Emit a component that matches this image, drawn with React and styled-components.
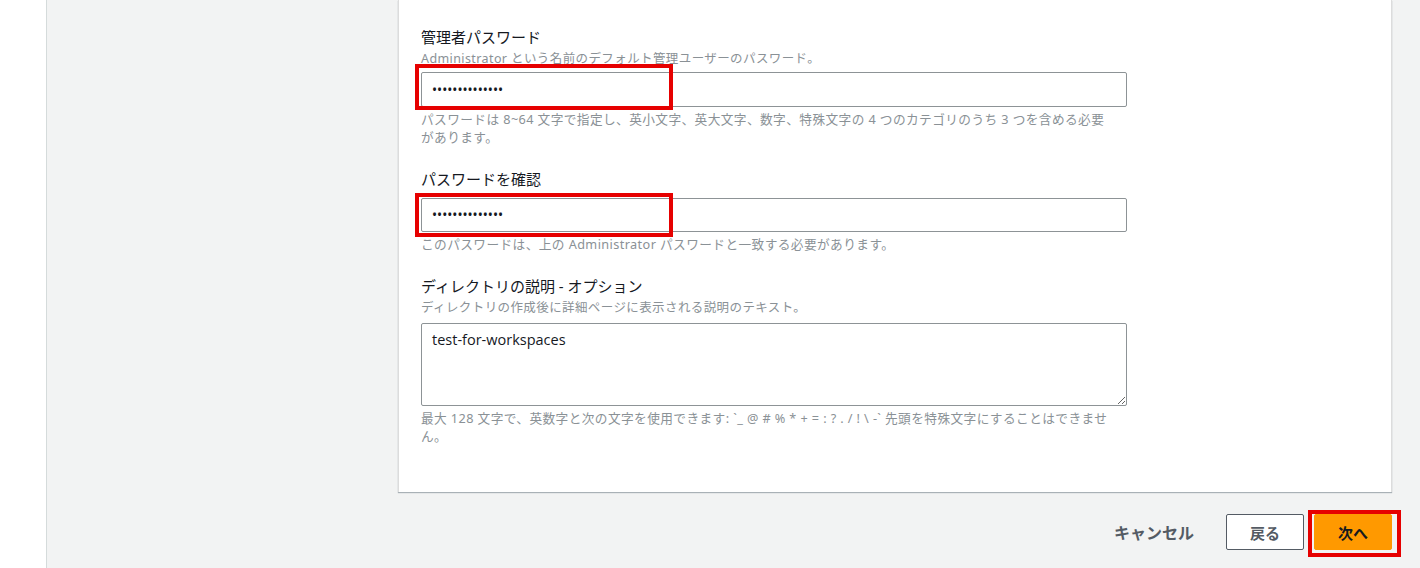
import styled, { createGlobalStyle } from 'styled-components'

const GlobalStyle = createGlobalStyle`
  html, body {
    margin: 0;
    padding: 0;
    background: #ffffff;
    font-family: "Noto Sans", "Noto Sans CJK JP", sans-serif;
  }
`

const Page = styled.div`
  display: flex;
  min-height: 568px;
  overflow: hidden;
`

const SideStrip = styled.div`
  width: 46px;
  flex-shrink: 0;
  background: #ffffff;
`

const Main = styled.main`
  flex: 1;
  background: #f2f3f3;
  border-left: 1px solid #d5dbdb;
  padding: 0 28px 0 351px;
  display: flex;
  flex-direction: column;
`

const Card = styled.section`
  background: #ffffff;
  border-left: 1px solid #dcdcdc;
  border-right: 1px solid #dcdcdc;
  box-shadow: 0 1px 1px 0 rgba(0, 27, 43, 0.3);
  padding: 27px 22px 47px 22px;
`

const Form = styled.div`
  width: 706px;
  display: flex;
  flex-direction: column;
`

const Field = styled.div`
  display: flex;
  flex-direction: column;
  margin-top: ${p => (p.$first ? 0 : 23)}px;
`

const Label = styled.label`
  font-size: 15px;
  line-height: 20px;
  color: #16191f;
`

const Description = styled.div`
  font-size: 12.5px;
  line-height: 16px;
  letter-spacing: 0.4px;
  color: #8a9196;
  margin-top: 4px;
`

const InputWrap = styled.div`
  position: relative;
  margin-top: ${p => p.$gap}px;
`

const TextInput = styled.input`
  box-sizing: border-box;
  width: 100%;
  height: ${p => p.$h}px;
  border: 1px solid #8d9396;
  border-radius: 2px;
  padding: 0 10px;
  font-family: "Noto Sans", "Noto Sans CJK JP", sans-serif;
  font-size: 13.5px;
  color: #16191f;
  background: #ffffff;
  outline: none;
`

const TextArea = styled.textarea`
  box-sizing: border-box;
  display: block;
  width: 100%;
  height: 83px;
  border: 1px solid #8d9396;
  border-radius: 2px;
  padding: 6px 10px;
  font-family: "Open Sans", "Noto Sans CJK JP", sans-serif;
  font-size: 14.5px;
  line-height: 20px;
  color: #16191f;
  background: #ffffff;
  outline: none;
`

const Highlight = styled.div`
  position: absolute;
  left: -6px;
  top: ${p => p.$top}px;
  width: 258px;
  height: ${p => p.$h}px;
  box-sizing: border-box;
  border: 4px solid #e60000;
  pointer-events: none;
`

const Hint = styled.div`
  font-size: 12.7px;
  line-height: 18px;
  letter-spacing: 0.4px;
  color: #8a9196;
  margin-top: 3px;
`

const Footer = styled.div`
  display: flex;
  justify-content: flex-end;
  align-items: center;
  margin-top: 22px;
  gap: 10px;
`

const LinkButton = styled.button`
  background: none;
  border: none;
  font-family: "Noto Sans", "Noto Sans CJK JP", sans-serif;
  font-size: 16px;
  font-weight: 700;
  color: #545b64;
  padding: 0 20px;
  margin-right: 2px;
  height: 36px;
`

const Button = styled.button`
  position: relative;
  box-sizing: border-box;
  width: 78px;
  height: 36px;
  border-radius: 2px;
  font-family: "Noto Sans", "Noto Sans CJK JP", sans-serif;
  font-size: 15px;
  font-weight: 700;
  color: ${p => (p.$primary ? '#16191f' : '#545b64')};
  background: ${p => (p.$primary ? '#ff9900' : '#ffffff')};
  border: 1px solid ${p => (p.$primary ? '#ff9900' : '#545b64')};
`

const ButtonHighlight = styled.div`
  position: absolute;
  left: -7px;
  top: -5px;
  right: -10px;
  bottom: -8px;
  border: 4px solid #e60000;
  pointer-events: none;
`

export default function App() {
  return (
    <>
      <GlobalStyle />
      <Page>
        <SideStrip />
        <Main>
          <Card>
            <Form>
              <Field $first>
                <Label>管理者パスワード</Label>
                <Description>Administrator という名前のデフォルト管理ユーザーのパスワード。</Description>
                <InputWrap $gap={5}>
                  <TextInput type="password" $h={35} defaultValue="aaaaaaaaaaaaaa" readOnly />
                  <Highlight $top={-8} $h={46} />
                </InputWrap>
                <Hint>
                  パスワードは 8~64 文字で指定し、英小文字、英大文字、数字、特殊文字の 4 つのカテゴリのうち 3 つを含める必要
                  <br />
                  があります。
                </Hint>
              </Field>

              <Field>
                <Label>パスワードを確認</Label>
                <InputWrap $gap={9}>
                  <TextInput type="password" $h={34} defaultValue="aaaaaaaaaaaaaa" readOnly />
                  <Highlight $top={-5} $h={44} />
                </InputWrap>
                <Hint>このパスワードは、上の Administrator パスワードと一致する必要があります。</Hint>
              </Field>

              <Field>
                <Label>ディレクトリの説明 - オプション</Label>
                <Description>ディレクトリの作成後に詳細ページに表示される説明のテキスト。</Description>
                <InputWrap $gap={7}>
                  <TextArea defaultValue="test-for-workspaces" />
                </InputWrap>
                <Hint>
                  最大 128 文字で、英数字と次の文字を使用できます: `_ @ # % * + = : ? . / ! \ -` 先頭を特殊文字にすることはできませ
                  <br />
                  ん。
                </Hint>
              </Field>
            </Form>
          </Card>

          <Footer>
            <LinkButton>キャンセル</LinkButton>
            <Button>戻る</Button>
            <Button $primary>
              次へ
              <ButtonHighlight />
            </Button>
          </Footer>
        </Main>
      </Page>
    </>
  )
}
